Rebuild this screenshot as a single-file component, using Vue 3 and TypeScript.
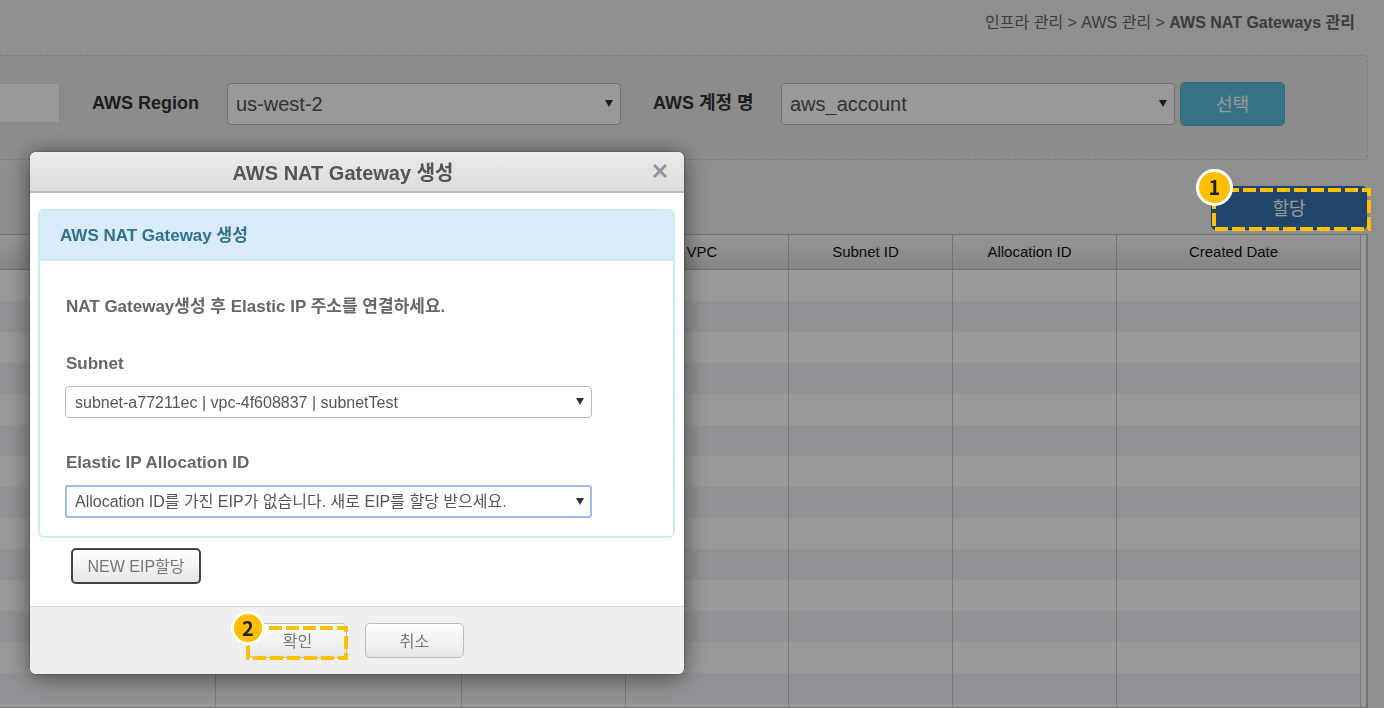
<script setup lang="ts">
import { ref } from 'vue'

interface Column {
  title: string
  width: number
}

const columns: Column[] = [
  { title: '', width: 216 },
  { title: '', width: 246 },
  { title: '', width: 164 },
  { title: 'VPC', width: 163 },
  { title: 'Subnet ID', width: 164 },
  { title: 'Allocation ID', width: 164 },
  { title: 'Created Date', width: 244 },
]
const totalWidth = columns.reduce((sum, c) => sum + c.width, 0)
const rowCount = 15

const keyword = ref('')
const region = ref('us-west-2')
const account = ref('aws_account')
const subnet = ref('subnet-a77211ec | vpc-4f608837 | subnetTest')
const allocation = ref('Allocation ID를 가진 EIP가 없습니다. 새로 EIP를 할당 받으세요.')
</script>

<template>
  <div class="page">
    <nav class="breadcrumb" aria-label="breadcrumb">
      인프라 관리 &gt; AWS 관리 &gt; <b>AWS NAT Gateways 관리</b>
    </nav>

    <section class="filters">
      <input v-model="keyword" class="keyword" type="text" aria-labelledby="region-label" />
      <label id="region-label" class="filter-label" for="region">AWS Region</label>
      <div class="select large">
        <select id="region" v-model="region">
          <option>us-west-2</option>
        </select>
        <svg class="arrow" viewBox="0 0 8 7"><path d="M0 0h8L4 7z" /></svg>
      </div>
      <label class="filter-label" for="account">AWS 계정 명</label>
      <div class="select large">
        <select id="account" v-model="account">
          <option>aws_account</option>
        </select>
        <svg class="arrow" viewBox="0 0 8 7"><path d="M0 0h8L4 7z" /></svg>
      </div>
      <button class="choose" type="button">선택</button>
    </section>

    <div class="toolbar">
      <button class="allocate" type="button">할당</button>
    </div>

    <div class="grid">
      <table>
        <colgroup>
          <col v-for="(c, i) in columns" :key="i" :style="{ width: (c.width / totalWidth) * 100 + '%' }" />
        </colgroup>
        <thead>
          <tr>
            <th v-for="(c, i) in columns" :key="i" scope="col">{{ c.title }}</th>
          </tr>
        </thead>
        <tbody>
          <tr v-for="r in rowCount" :key="r">
            <td v-for="(c, i) in columns" :key="i"></td>
          </tr>
        </tbody>
      </table>
    </div>
  </div>

  <div class="overlay">
    <div class="mark mark-allocate">
      <svg class="outline"><rect width="100%" height="100%" /></svg>
      <span class="badge">1</span>
    </div>

    <div class="dialog" role="dialog" aria-labelledby="dialog-title">
      <header class="dialog-head">
        <h2 id="dialog-title">AWS NAT Gateway 생성</h2>
        <button class="close" type="button" aria-label="닫기">
          <svg viewBox="0 0 14 14"><path d="M1 1l12 12M13 1L1 13" /></svg>
        </button>
      </header>

      <div class="dialog-body">
        <section class="panel">
          <h3>AWS NAT Gateway 생성</h3>
          <div class="panel-body">
            <p>NAT Gateway생성 후 Elastic IP 주소를 연결하세요.</p>
            <label for="subnet">Subnet</label>
            <div class="select">
              <select id="subnet" v-model="subnet">
                <option>subnet-a77211ec | vpc-4f608837 | subnetTest</option>
              </select>
              <svg class="arrow" viewBox="0 0 8 7"><path d="M0 0h8L4 7z" /></svg>
            </div>
            <label for="allocation">Elastic IP Allocation ID</label>
            <div class="select focused">
              <select id="allocation" v-model="allocation">
                <option>Allocation ID를 가진 EIP가 없습니다. 새로 EIP를 할당 받으세요.</option>
              </select>
              <svg class="arrow" viewBox="0 0 8 7"><path d="M0 0h8L4 7z" /></svg>
            </div>
          </div>
        </section>
        <button class="btn new-eip" type="button">NEW EIP할당</button>
      </div>

      <footer class="dialog-foot">
        <div class="confirm">
          <button class="btn" type="button">확인</button>
          <div class="mark mark-confirm">
            <svg class="outline"><rect width="100%" height="100%" /></svg>
            <span class="badge">2</span>
          </div>
        </div>
        <button class="btn" type="button">취소</button>
      </footer>
    </div>
  </div>
</template>

<style>
body {
  margin: 0;
  background: #ebf0ed;
  font-family: "Liberation Sans", "Noto Sans CJK KR", sans-serif;
}
</style>

<style scoped>
* {
  box-sizing: border-box;
}
button,
input,
select {
  font-family: inherit;
  margin: 0;
}
h2,
h3,
p {
  margin: 0;
}

.page {
  height: 100vh;
  padding-right: 16px;
  display: flex;
  flex-direction: column;
  overflow: hidden;
}
.breadcrumb {
  height: 55px;
  flex: none;
  padding: 11px 13px 0 0;
  text-align: right;
  font-size: 16px;
  line-height: 24px;
  color: #666;
}
.filters {
  height: 105px;
  flex: none;
  padding: 26px 82px 0 0;
  display: grid;
  grid-template-columns: 60px 167px 1fr 160px 1fr 110px;
  align-items: start;
  background: #eaeaea;
  border: 1px dashed #cdcdcd;
  border-left: 0;
  border-radius: 0 4px 4px 0;
}
.keyword {
  height: 40px;
  width: 100%;
  margin-top: 1px;
  border: 1px solid #e0e0e0;
  border-left: 0;
  background: #fff;
}
.filter-label {
  padding-left: 32px;
  font-size: 18px;
  font-weight: bold;
  line-height: 42px;
  color: #333;
}

.select {
  position: relative;
  height: 32px;
}
.select select {
  width: 100%;
  height: 100%;
  padding: 0 30px 0 9px;
  appearance: none;
  border: 1px solid #bbb;
  border-radius: 4px;
  background: #fff;
  color: #555;
  font-size: 16px;
}
.select.focused {
  height: 33px;
}
.select.focused select {
  border: 2px solid #9dbdec;
  border-radius: 3px;
  padding-left: 8px;
}
.select.large {
  height: 42px;
  margin-top: 1px;
}
.select.large select {
  padding-left: 8px;
  font-size: 20px;
}
.arrow {
  position: absolute;
  right: 8px;
  top: 50%;
  width: 8px;
  height: 7px;
  margin-top: -4px;
  fill: #333;
  pointer-events: none;
}

.choose,
.allocate {
  height: 44px;
  border-radius: 5px;
  color: #fff;
  font-size: 18px;
  padding: 0 0 2px;
}
.choose {
  margin-left: 5px;
  background: #5bc0de;
  border: 1px solid #46b8da;
}
.toolbar {
  height: 74px;
  flex: none;
  padding: 26px 1px 0 0;
  display: flex;
  justify-content: flex-end;
  align-items: flex-start;
}
.allocate {
  width: 156px;
  background: #3775b2;
  border: 1px solid #2e6da4;
}

.grid {
  flex: 1;
  min-height: 0;
  overflow: hidden;
  padding-right: 5px;
  border: 1px solid #c0c0c0;
  border-left: 0;
  border-right-width: 2px;
  background: #fff;
}
table {
  width: 100%;
  table-layout: fixed;
  border-collapse: separate;
  border-spacing: 0;
}
th {
  height: 35px;
  padding: 0 10px 2px 0;
  font-size: 15px;
  font-weight: normal;
  color: #111;
  background: linear-gradient(#fafafa, #dedede);
  border-right: 1px solid #bdbdbd;
  border-bottom: 1px solid #bdbdbd;
}
td {
  height: 31px;
  padding: 0;
  border-right: 1px solid #c8c8c8;
}
tbody tr:nth-child(even) {
  background: #f1f4f8;
}

.overlay {
  position: fixed;
  inset: 0;
  padding: 152px 0 0 30px;
  background: rgba(0, 0, 0, 0.4);
}
.dialog {
  width: 654px;
  max-width: 100%;
  border-radius: 6px;
  background: #fff;
  box-shadow: 0 3px 24px rgba(0, 0, 0, 0.55), 0 0 2px rgba(0, 0, 0, 0.5);
  color: #666;
}
.dialog-head {
  position: relative;
  height: 41px;
  border-bottom: 2px solid #bdbdbd;
  border-radius: 6px 6px 0 0;
  background: linear-gradient(#ebebeb, #dcdcdc);
}
.dialog-head h2 {
  padding-right: 28px;
  text-align: center;
  font-size: 20px;
  line-height: 42px;
  color: #555;
}
.close {
  position: absolute;
  right: 17px;
  top: 12px;
  width: 14px;
  height: 14px;
  padding: 0;
  border: 0;
  background: none;
}
.close svg {
  display: block;
  width: 14px;
  height: 14px;
  stroke: #8b979d;
  stroke-width: 3;
}
.dialog-body {
  padding: 16px 9px 22px 8px;
}
.panel {
  border: 2px solid #c9edf3;
  border-radius: 6px;
}
.panel h3 {
  height: 50px;
  padding-left: 20px;
  border-bottom: 2px solid #c5e8f1;
  border-radius: 4px 4px 0 0;
  background: #d8ebf6;
  color: #31708f;
  font-size: 17px;
  line-height: 50px;
}
.panel-body {
  padding: 34px 81px 18px 25px;
  font-size: 17px;
  font-weight: bold;
  line-height: 24px;
}
.panel-body label {
  display: block;
  margin: 33px 0 10px 1px;
}
.panel-body p {
  padding-left: 1px;
}
.btn {
  width: 99px;
  height: 35px;
  padding: 0 0 2px;
  border: 1px solid #bbb;
  border-radius: 5px;
  background: linear-gradient(#fff, #e6e6e6);
  color: #777;
  font-size: 16px;
}
.new-eip {
  display: block;
  width: 130px;
  height: 36px;
  margin: 10px 0 0 33px;
  border: 2px solid #444;
}
.dialog-foot {
  height: 68px;
  display: flex;
  justify-content: center;
  gap: 18px;
  padding: 16px 2px 0 0;
  border-top: 1px solid #d8d8d8;
  border-radius: 0 0 6px 6px;
  background: #efefef;
}
.confirm {
  position: relative;
}

.mark {
  position: absolute;
  pointer-events: none;
}
.mark-allocate {
  top: 190px;
  right: 15px;
  width: 155px;
  height: 39px;
}
.mark-confirm {
  top: 5px;
  left: 0;
  width: 98px;
  height: 30px;
}
.outline {
  display: block;
  width: 100%;
  height: 100%;
  overflow: visible;
}
.outline rect {
  fill: none;
  stroke: #ffc000;
  stroke-width: 4;
  stroke-dasharray: 13 4;
  stroke-dashoffset: 5;
}
.mark-confirm .outline rect {
  stroke-dashoffset: 13;
}
.badge {
  position: absolute;
  left: -18px;
  top: -21px;
  width: 37px;
  height: 37px;
  border: 3px solid #fff;
  border-radius: 50%;
  background: #ffc000;
  color: #222;
  font-family: "Noto Sans CJK KR", sans-serif;
  font-size: 20px;
  font-weight: bold;
  line-height: 29px;
  text-align: center;
}
.mark-confirm .badge {
  left: -17px;
  top: -17px;
  width: 34px;
  height: 34px;
  line-height: 28px;
}
</style>
